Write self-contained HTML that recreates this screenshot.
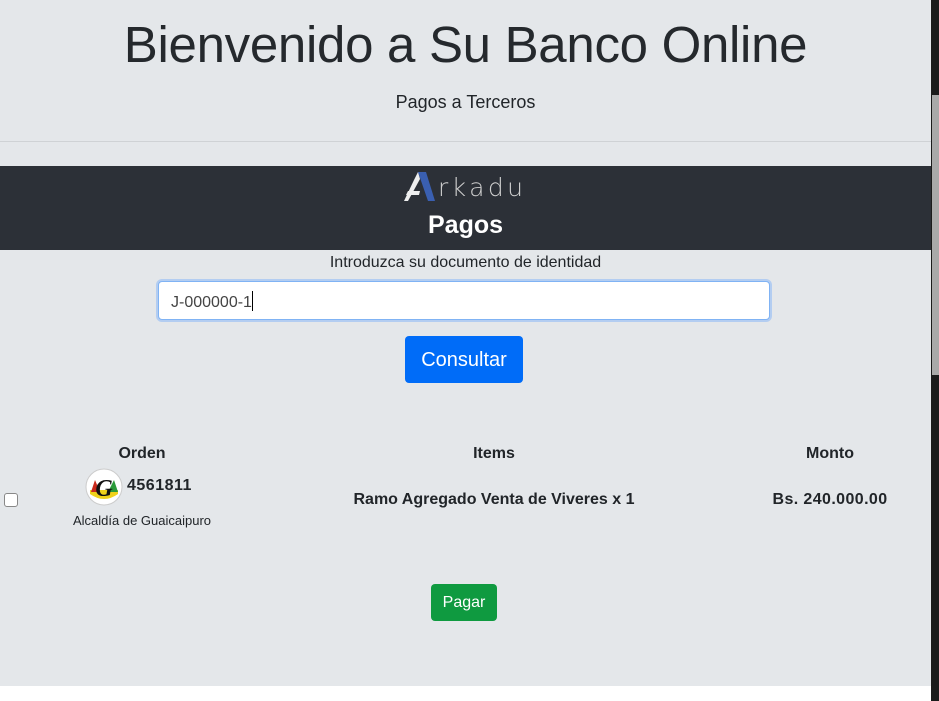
<!DOCTYPE html>
<html><head><meta charset="utf-8"><style>
body{margin:0;width:939px;height:701px;background:#fff;font-family:"Liberation Sans",sans-serif;color:#212529;position:relative;overflow:hidden}
.bg{position:absolute;left:0;top:0;width:931px;height:686px;background:#e4e7ea}
.strip{position:absolute;left:931px;top:0;width:8px;height:701px;background:#1b1b1b}
.strip2{position:absolute;left:932px;top:95px;width:7px;height:280px;background:#a9a9a9}
.c{position:absolute;left:0;width:931px;text-align:center;white-space:nowrap}
.a{position:absolute;white-space:nowrap}
</style></head><body>
<div class="bg"></div>
<div class="strip"></div><div class="strip2"></div>
<div class="c" style="top:15px;font-size:51px;font-weight:300;letter-spacing:-0.3px;color:#25292d">Bienvenido a Su Banco Online</div>
<div class="c" style="top:92px;font-size:18px">Pagos a Terceros</div>
<div style="position:absolute;left:0;top:141px;width:931px;height:1px;background:#cfd2d5"></div>
<div style="position:absolute;left:0;top:166px;width:931px;height:84px;background:#2c3037"></div>
<svg style="position:absolute;left:404px;top:171px" width="125" height="32" viewBox="0 0 125 32">
<polygon points="14,1 22,1 31,30 24,30" fill="#3a5fb0"/>
<polygon points="10,9 14,1 16,8 4,30 0,30" fill="#eee"/>
<polygon points="4,20 16,20 15,24 2,24" fill="#eee"/>
<text x="34" y="25" font-family="DejaVu Sans" font-size="25" font-weight="200" fill="#cfcfcf" letter-spacing="1" textLength="86">rkadu</text>
</svg>
<div class="c" style="top:211px;font-size:25px;font-weight:bold;color:#fff">Pagos</div>
<div class="c" style="top:254px;font-size:16px">Introduzca su documento de identidad</div>
<div class="a" style="left:158px;top:281px;width:610px;height:37px;background:#fff;border:1px solid #80b3f4;border-radius:4px;box-shadow:0 0 0 2px #b3cdf1"></div>
<div class="a" style="left:171px;top:291px;font-size:16px;color:#444">J-000000-1<span style="display:inline-block;width:1px;height:20px;background:#000;vertical-align:-4px"></span></div>
<div class="a" style="left:405px;top:336px;width:118px;height:47px;background:#006cf8;border-radius:4px;color:#fff;font-size:20px;text-align:center;line-height:48px">Consultar</div>
<div class="a" style="left:92px;top:445px;width:100px;text-align:center;font-weight:bold;font-size:16px">Orden</div>
<div class="a" style="left:444px;top:445px;width:100px;text-align:center;font-weight:bold;font-size:16px">Items</div>
<div class="a" style="left:780px;top:445px;width:100px;text-align:center;font-weight:bold;font-size:16px">Monto</div>
<div class="a" style="left:4px;top:493px;width:12px;height:12px;background:#fff;border:1px solid #888;border-radius:3px"></div>
<svg style="position:absolute;left:85px;top:468px" width="38" height="38" viewBox="0 0 38 38">
<circle cx="19" cy="19" r="18" fill="#fff" stroke="#ccc"/>
<path d="M5,26 Q19,36 33,26 L33,22 L5,22Z" fill="#f0d21a"/>
<path d="M6,24 L10,12 L15,24Z" fill="#c8281c"/>
<path d="M23,24 L29,12 L33,24Z" fill="#2a9a3a"/>
<text x="19" y="28" text-anchor="middle" font-family="Liberation Serif" font-style="italic" font-weight="bold" font-size="24" fill="#111">G</text>
</svg>
<div class="a" style="left:127px;top:477px;font-size:16px;font-weight:bold;letter-spacing:0.5px">4561811</div>
<div class="a" style="left:62px;top:513px;width:160px;text-align:center;font-size:13px">Alcaldía de Guaicaipuro</div>
<div class="a" style="left:294px;top:491px;width:400px;text-align:center;font-size:16px;font-weight:bold">Ramo Agregado Venta de Viveres x 1</div>
<div class="a" style="left:730px;top:491px;width:200px;text-align:center;font-size:16px;font-weight:bold;letter-spacing:0.4px">Bs. 240.000.00</div>
<div class="a" style="left:431px;top:584px;width:66px;height:37px;background:#0f9a40;border-radius:4px;color:#fff;font-size:16px;text-align:center;line-height:38px">Pagar</div>
</body></html>
